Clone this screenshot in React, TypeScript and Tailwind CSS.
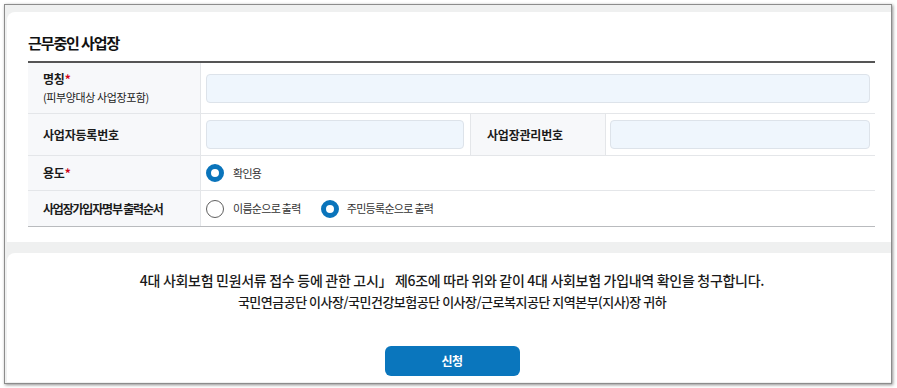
const Radio = ({ checked }: { checked?: boolean }) => (
  <span
    className={
      checked
        ? "inline-block w-[18px] h-[18px] rounded-full border-[5px] border-[#0a74bb] bg-white"
        : "inline-block w-[18px] h-[18px] rounded-full border border-[#5f5f5f] bg-white"
    }
  />
);

const Input = () => (
  <div className="h-[29px] w-full rounded-[4px] border border-[#dde3ea] bg-[#eff6fd]" />
);

export default function App() {
  return (
    <div className="min-h-screen bg-white font-['Noto_Sans_CJK_KR','Noto_Sans',sans-serif] pt-[4px] pl-[4px]">
      <div className="w-[888px] h-[380px] border border-[#8c8c8c] bg-[#eff0f0] pt-[7px] pl-[2px] shadow-[1px_1px_3px_rgba(0,0,0,0.45)]">
        {/* 근무중인 사업장 */}
        <section className="h-[230px] bg-white rounded-tl-[8px] pt-[20px] pl-[21px] pr-[16px]">
          <h2 className="text-[15px] leading-[22px] font-bold tracking-[-1.1px] text-[#111]">
            근무중인 사업장
          </h2>
          <div className="mt-[7px] border-t-2 border-[#555] border-b border-b-[#b9bbbe]">
            <div className="grid grid-cols-[173px_1fr] h-[51px] border-b border-[#e4e6e9]">
              <div className="flex flex-col justify-center pl-[15px] bg-[#f7f8fa] border-r border-[#e4e6e9] text-[#1b1b1b]">
                <span className="text-[12px] leading-[18px] font-bold tracking-[-0.2px]">
                  명칭<span className="text-[#d0021b]">*</span>
                </span>
                <span className="text-[11px] leading-[18px] tracking-[-0.4px]">
                  (피부양대상 사업장포함)
                </span>
              </div>
              <div className="flex items-center pl-[5px] pr-[5px]">
                <Input />
              </div>
            </div>
            <div className="grid grid-cols-[173px_1fr_136px_1fr] h-[42px] border-b border-[#e4e6e9]">
              <div className="flex items-center pl-[15px] bg-[#f7f8fa] border-r border-[#e4e6e9] text-[12px] font-bold tracking-[-0.2px] text-[#1b1b1b]">
                사업자등록번호
              </div>
              <div className="flex items-center pl-[5px] pr-[6px]">
                <Input />
              </div>
              <div className="flex items-center pl-[16px] bg-[#f7f8fa] border-x border-[#e4e6e9] text-[12px] font-bold tracking-[-0.2px] text-[#1b1b1b]">
                사업장관리번호
              </div>
              <div className="flex items-center pl-[4px] pr-[5px]">
                <Input />
              </div>
            </div>
            <div className="grid grid-cols-[173px_1fr] h-[35px] border-b border-[#e4e6e9]">
              <div className="flex items-center pl-[15px] bg-[#f7f8fa] border-r border-[#e4e6e9] text-[12px] font-bold tracking-[-0.2px] text-[#1b1b1b]">
                용도<span className="text-[#d0021b]">*</span>
              </div>
              <div className="flex items-center pl-[5px] gap-[9px] text-[11px] tracking-[-0.7px] text-[#333]">
                <Radio checked />
                <span>확인용</span>
              </div>
            </div>
            <div className="grid grid-cols-[173px_1fr] h-[35px]">
              <div className="flex items-center pl-[15px] bg-[#f7f8fa] border-r border-[#e4e6e9] text-[12px] font-bold tracking-[-1.2px] text-[#1b1b1b]">
                사업장가입자명부 출력순서
              </div>
              <div className="flex items-center pl-[5px] text-[11px] tracking-[-0.7px] text-[#333]">
                <div className="flex items-center gap-[9px]">
                  <Radio />
                  <span>이름순으로 출력</span>
                </div>
                <div className="flex items-center gap-[8px] ml-[20px]">
                  <Radio checked />
                  <span>주민등록순으로 출력</span>
                </div>
              </div>
            </div>
          </div>
        </section>

        {/* 청구 문구 */}
        <section className="mt-[11px] h-[129px] bg-white rounded-tl-[8px] pt-[17px] flex flex-col items-center">
          <p className="text-[14px] leading-[20px] font-medium tracking-[-0.3px] text-[#1a1a1a] pl-[6px]">
            4대 사회보험 민원서류 접수 등에 관한 고시」 제6조에 따라 위와 같이 4대 사회보험 가입내역 확인을 청구합니다.
          </p>
          <p className="mt-[2px] text-[13px] leading-[20px] font-medium tracking-[-0.5px] text-[#1a1a1a] pl-[6px]">
            국민연금공단 이사장/국민건강보험공단 이사장/근로복지공단 지역본부(지사)장 귀하
          </p>
          <button className="mt-[34px] ml-[6px] w-[135px] h-[30px] rounded-[6px] bg-[#0a76bd] text-white text-[12px] font-bold tracking-[-0.5px]">
            신청
          </button>
        </section>
      </div>
    </div>
  );
}
